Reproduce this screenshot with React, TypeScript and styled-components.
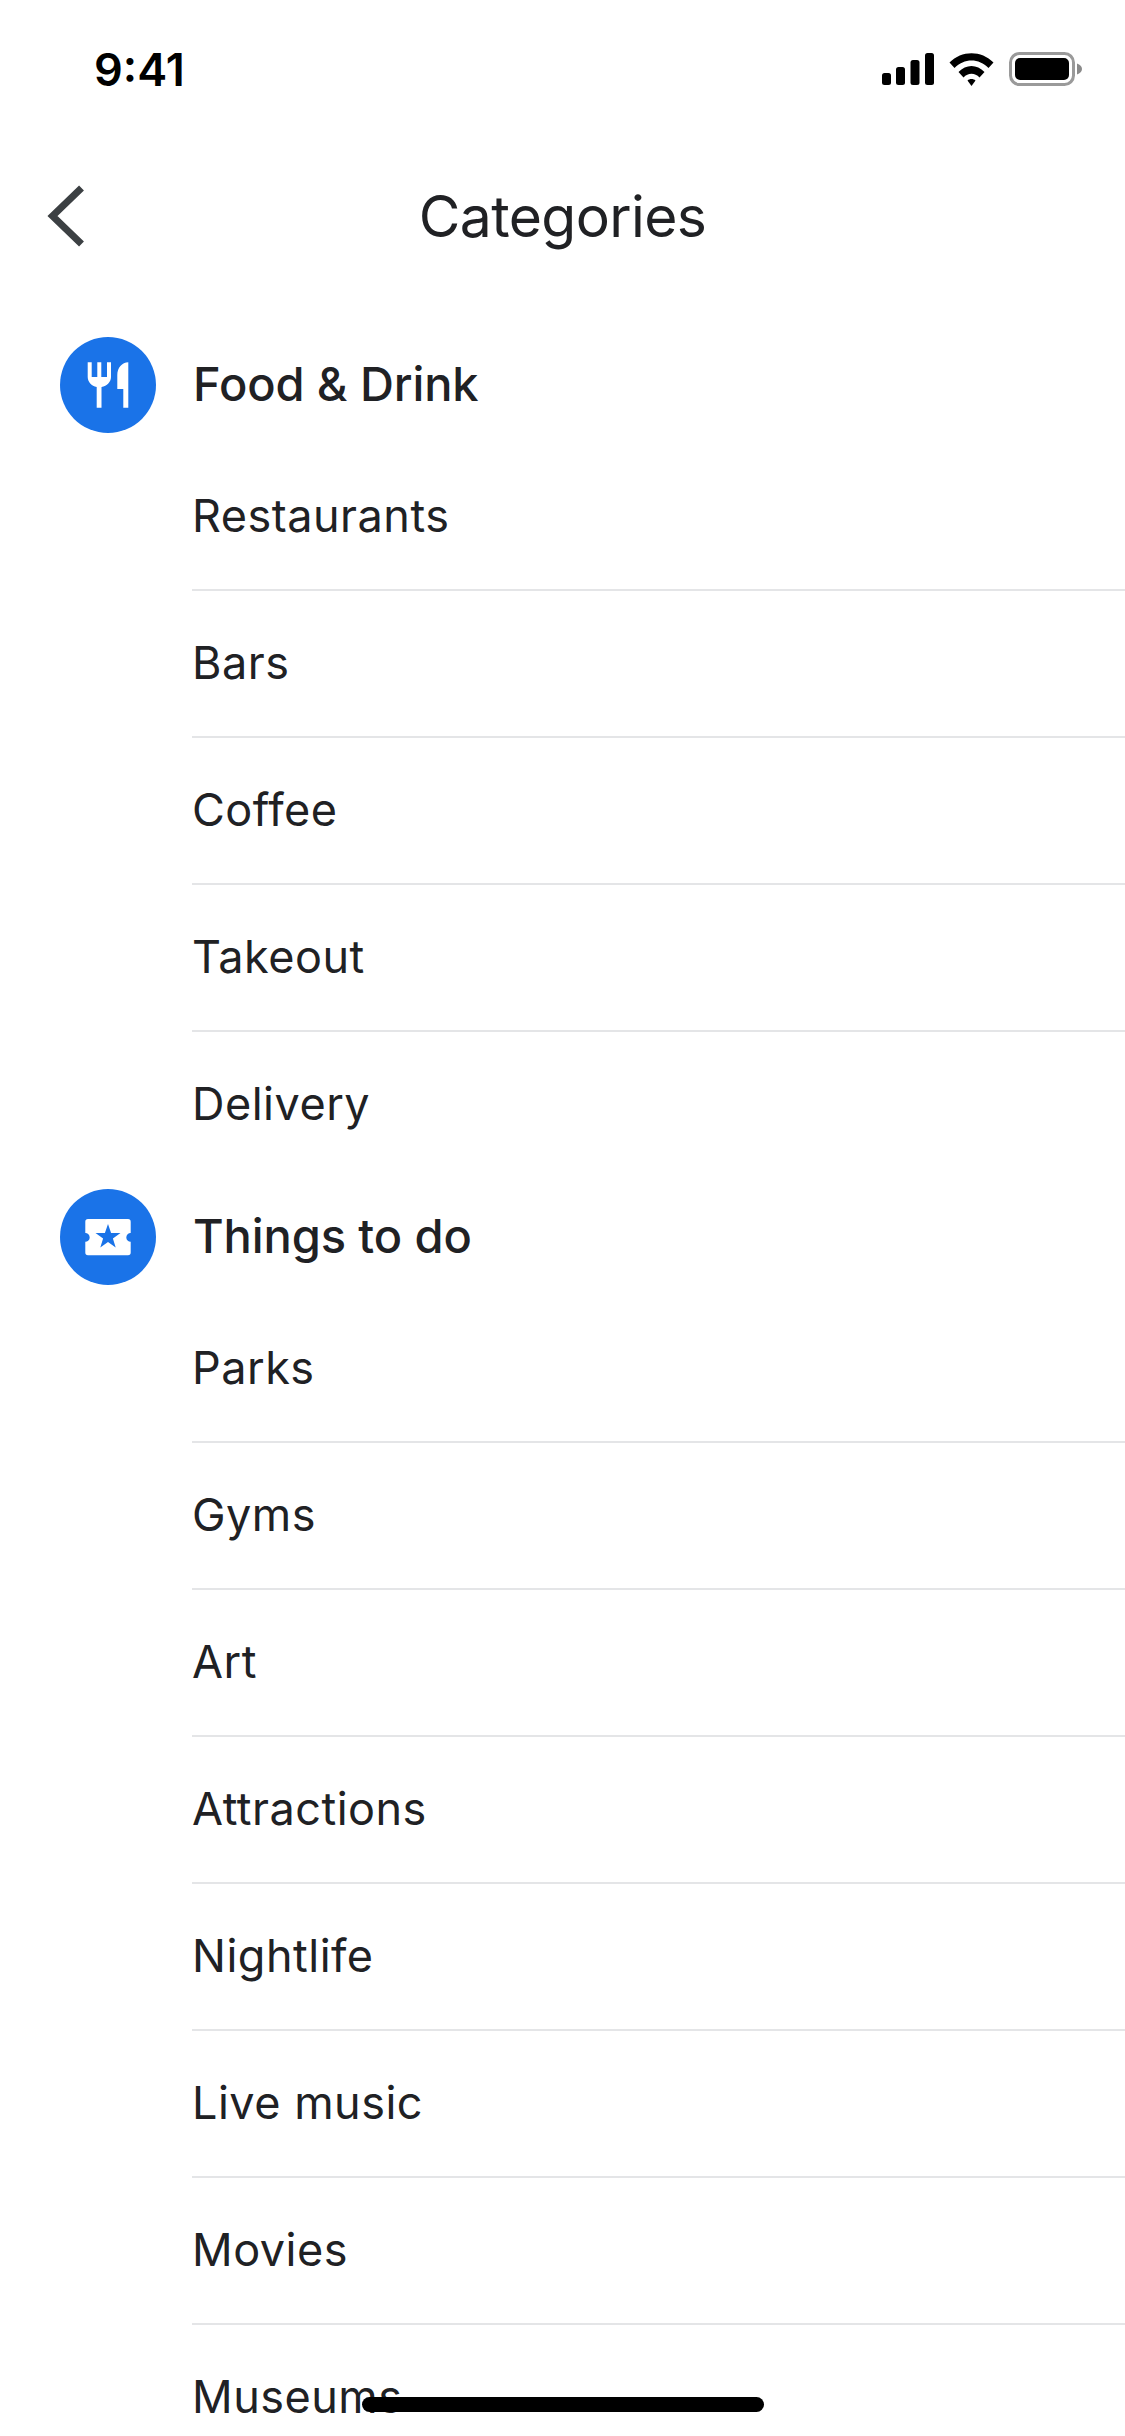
import React, { FC } from "react";
import styled, { createGlobalStyle } from "styled-components";

const GlobalStyle = createGlobalStyle`
  html, body {
    margin: 0;
    padding: 0;
    background: #ffffff;
  }
`;

const Screen = styled.div`
  position: relative;
  width: 1125px;
  height: 2436px;
  overflow: hidden;
  background: #ffffff;
  color: #202124;
  font-family: Inter, "Liberation Sans", sans-serif;
`;

const StatusBar = styled.div`
  display: flex;
  align-items: center;
  justify-content: space-between;
  height: 138px;
  padding: 0 43px 0 94px;
  box-sizing: border-box;
`;

const Clock = styled.span`
  font-size: 45px;
  font-weight: 600;
  color: #000000;
`;

const StatusIcons = styled.div`
  display: flex;
  align-items: center;
  gap: 15px;
`;

const NavBar = styled.div`
  display: grid;
  grid-template-columns: 1fr auto 1fr;
  align-items: center;
  height: 156px;
`;

const BackButton = styled.div`
  display: flex;
  margin-left: 46px;
`;

const Title = styled.h1`
  margin: 0;
  font-size: 57px;
  font-weight: 400;
  letter-spacing: -0.6px;
  line-height: 1;
`;

const SectionList = styled.div`
  padding-top: 32px;
`;

const SectionHeader = styled.div`
  display: flex;
  align-items: center;
  gap: 37px;
  height: 117px;
  padding-left: 60px;
`;

const Badge = styled.div`
  display: flex;
  flex-shrink: 0;
  width: 96px;
  height: 96px;
  border-radius: 50%;
  background: #1a73e8;
`;

const SectionTitle = styled.span`
  padding-bottom: 2px;
  font-size: 47px;
  font-weight: 500;
  letter-spacing: -0.1px;
`;

const Row = styled.div<{ $last?: boolean }>`
  display: flex;
  align-items: center;
  height: 147px;
  box-sizing: border-box;
  padding-bottom: 2px;
  margin-left: 192px;
  box-shadow: ${(p) =>
    p.$last ? "none" : "inset 0 -1px #e4e5e7, 0 1px #e4e5e7"};
  font-size: 45px;
  letter-spacing: 0.5px;
`;

const HomeIndicator = styled.div`
  position: absolute;
  left: 362px;
  bottom: 24px;
  width: 402px;
  height: 15px;
  border-radius: 8px;
  background: #000000;
`;

const SignalIcon = () => (
  <svg width="52" height="32" viewBox="0 0 52 32">
    <rect x="0" y="20" width="9" height="12" rx="2.5" />
    <rect x="14" y="14" width="9" height="18" rx="2.5" />
    <rect x="28.5" y="7" width="9" height="25" rx="2.5" />
    <rect x="43" y="0" width="9" height="32" rx="2.5" />
  </svg>
);

const WifiIcon = () => (
  <svg width="45" height="33" viewBox="0 0 45 33">
    <path d="M0.5 9.5C12.5 -3 32.5 -3 44.5 9.5L39.5 15C30 5 15 5 5.5 15Z" />
    <path d="M9.5 19C17 11 28 11 35.5 19L30.5 24.5C26 19.5 19 19.5 14.5 24.5Z" />
    <path d="M18.5 27.5C20.5 25.5 24.5 25.5 26.5 27.5L22.5 33Z" />
  </svg>
);

const BatteryIcon = () => (
  <svg width="73" height="34" viewBox="0 0 73 34">
    <rect x="1.5" y="1.5" width="63" height="31" rx="9" fill="none" stroke="#9a9a9a" strokeWidth="3" />
    <rect x="6" y="6" width="54" height="22" rx="5" />
    <path d="M68 11.5C71 12.5 73 14.5 73 17C73 19.5 71 21.5 68 22.5Z" fill="#8a8a8a" />
  </svg>
);

const BackIcon = () => (
  <svg width="38" height="62" viewBox="0 0 38 62" fill="none">
    <path d="M35.500 3L6.500 31L35.500 59" stroke="#3c4043" strokeWidth="7" />
  </svg>
);

const FoodIcon = () => (
  <svg width="96" height="96" viewBox="0 0 96 96" fill="#ffffff">
    <path d="M27.7 25.3H31.7V40H37.3V25.3H41.3V40H47V25.3H51V40C51 45 47 49 41.5 50V70.7H36.7V50C31.5 49 27.7 45 27.7 40Z" />
    <path d="M68.3 25.3V70.7H63.3V52H57.3V38C57.3 31 62 25.3 68.3 25.3Z" />
  </svg>
);

// ticket outline with side notches, the star is punched out of it
const TicketIcon = () => (
  <svg width="96" height="96" viewBox="0 0 96 96" fill="#ffffff">
    <path
      fillRule="evenodd"
      d="M28 30H68A2.7 2.7 0 0 1 70.7 32.700V44A4.400 4.400 0 0 0 70.700 52.800V63.600A2.700 2.700 0 0 1 68 66.300H28A2.700 2.700 0 0 1 25.300 63.600V52.800A4.400 4.400 0 0 0 25.300 44V32.700A2.700 2.700 0 0 1 28 30ZM48 35L51.100 43.900H60.500L52.900 49.500L55.700 58.400L48 53L40.300 58.400L43.100 49.500L35.500 43.900H44.900Z"
    />
  </svg>
);

type Section = {
  title: string;
  icon: React.ReactNode;
  items: string[];
};

const SECTIONS: Section[] = [
  {
    title: "Food & Drink",
    icon: <FoodIcon />,
    items: ["Restaurants", "Bars", "Coffee", "Takeout", "Delivery"],
  },
  {
    title: "Things to do",
    icon: <TicketIcon />,
    items: [
      "Parks",
      "Gyms",
      "Art",
      "Attractions",
      "Nightlife",
      "Live music",
      "Movies",
      "Museums",
    ],
  },
];

const App: FC = () => {
  return (
    <Screen>
      <GlobalStyle />
      <StatusBar>
        <Clock>9:41</Clock>
        <StatusIcons>
          <SignalIcon />
          <WifiIcon />
          <BatteryIcon />
        </StatusIcons>
      </StatusBar>
      <NavBar>
        <BackButton>
          <BackIcon />
        </BackButton>
        <Title>Categories</Title>
      </NavBar>
      <SectionList>
        {SECTIONS.map((section) => (
          <div key={section.title}>
            <SectionHeader>
              <Badge>{section.icon}</Badge>
              <SectionTitle>{section.title}</SectionTitle>
            </SectionHeader>
            {section.items.map((item, index) => (
              <Row key={item} $last={index === section.items.length - 1}>
                {item}
              </Row>
            ))}
          </div>
        ))}
      </SectionList>
      <HomeIndicator />
    </Screen>
  );
};

export default App;
